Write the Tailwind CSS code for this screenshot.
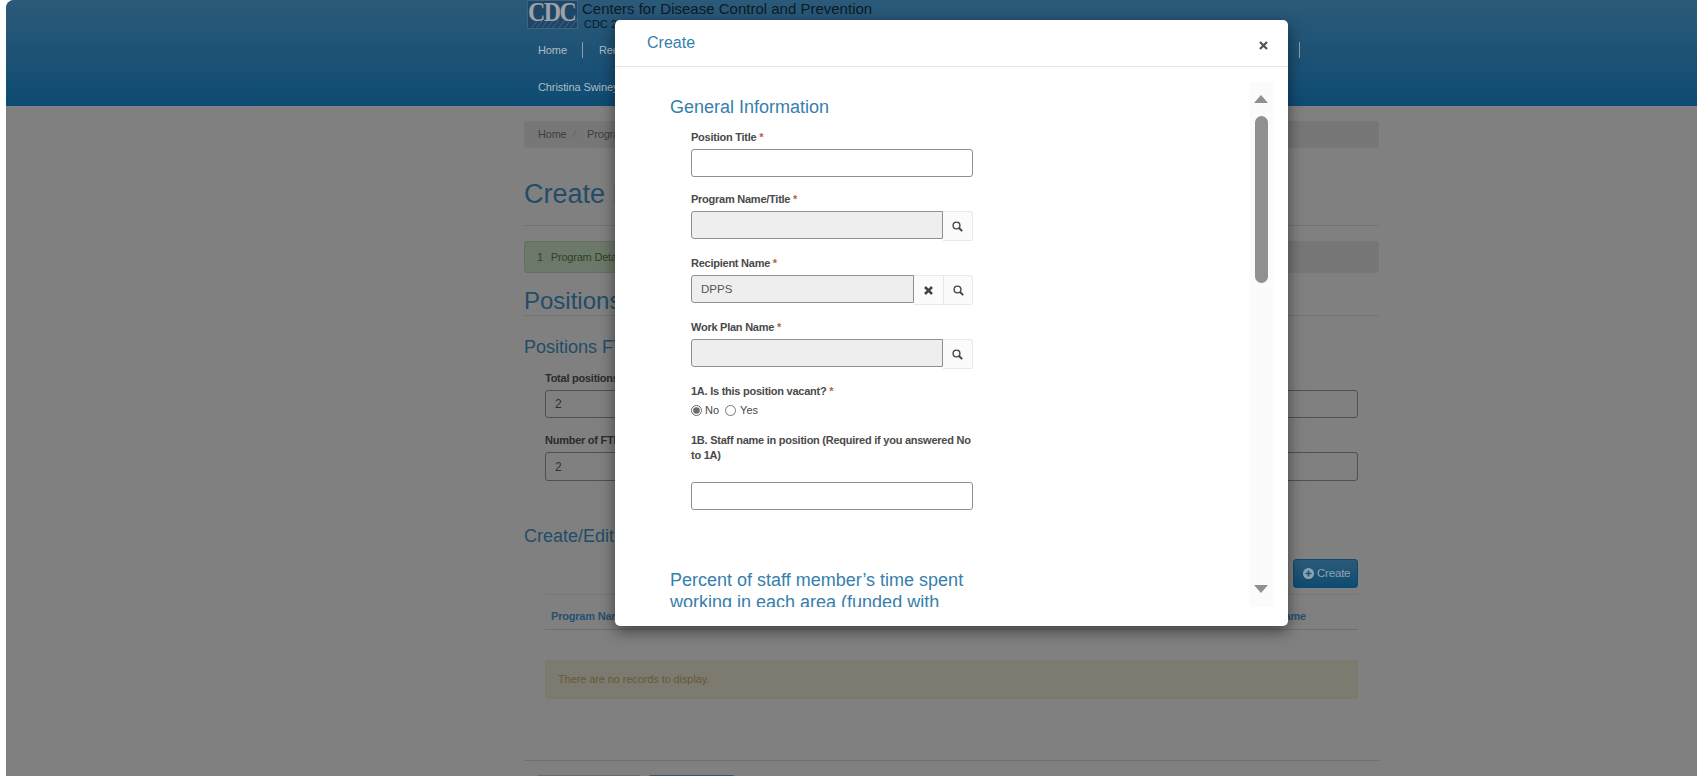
<!DOCTYPE html>
<html lang="en">

<head>
  <meta charset="UTF-8">
  <meta name="viewport" content="width=device-width, initial-scale=1.0">
  <title>Create Position</title>
  <script src="https://cdn.jsdelivr.net/npm/@tailwindcss/browser@4"></script>
</head>

<body class="bg-white h-screen overflow-hidden font-['Liberation_Sans',Arial,sans-serif]">
  <div class="relative h-[776px] overflow-hidden">

    <!-- dimmed page behind the dialog -->
    <div class="ml-[6px] h-full bg-[#808080] rounded-tl-[8px] overflow-hidden">
      <header class="h-[106px] bg-gradient-to-b from-[#2b5a79] to-[#0d4b72]">
        <div class="ml-[518px] w-[855px]">
          <div class="flex h-[29px] pl-[3px]">
            <div class="relative w-[51px] h-[29px] bg-[#1d4668] border border-[#3f6283] overflow-hidden">
              <svg class="absolute inset-0" width="51" height="29" viewBox="0 0 51 29" fill="none" stroke="#56799a" stroke-width="0.6">
                <path d="M2 29L9 20M7 29L14 20M12 29L19 20M17 29L25 20M23 29L31 19M29 29L38 18M35 29L44 18M41 29L50 17M47 29L51 24" />
              </svg>
              <span class="absolute left-0 -top-[2px] origin-top scale-y-[1.15] font-['Liberation_Serif',serif] font-bold text-[24px] leading-[22px] tracking-[-1.6px] text-[#9ea2a5]">CDC</span>
            </div>
            <div class="ml-[4px]">
              <div class="text-[15px] leading-[18px] text-[#0d1a24]">Centers for Disease Control and Prevention</div>
              <div class="ml-[2px] text-[11px] leading-[13px] text-[#0d1a24]">CDC 24/7</div>
            </div>
          </div>
          <nav class="relative h-[77px] pl-[14px] pt-[13px] text-[11px] tracking-[-0.1px] leading-[16px] text-[#aebcc4]">
            <div class="flex items-center h-[16px]">
              <span class="w-[44px]">Home</span>
              <span class="w-px h-[16px] bg-[#8d9aa3]"></span>
              <span class="ml-[16px]">Recipients</span>
              <span class="absolute left-[775px] top-[13px] w-px h-[16px] bg-[#8d9aa3]"></span>
            </div>
            <div class="mt-[21px]">Christina Swiney</div>
          </nav>
        </div>
      </header>

      <main class="ml-[518px] w-[855px]">
        <div class="mt-[15px] h-[27px] bg-[#777777] rounded-[3px] pl-[14px] text-[11px] tracking-[-0.2px] leading-[27px] text-[#3f3f3f]">
          Home <span class="ml-[3px] mr-[9px] text-[#666]">/</span> Program
        </div>

        <h1 class="mt-[31px] text-[27px] leading-[30px] text-[#234c66]">Create Position</h1>
        <div class="mt-[16px] border-t border-[#737373]"></div>

        <div class="mt-[15px] h-[32px] bg-[#777777] rounded-[3px]">
          <div class="w-[200px] h-[32px] bg-[#6c7869] rounded-l-[3px] border border-[#657060] pl-[12px] text-[11px] tracking-[-0.2px] leading-[30px] text-[#2b4426]">
            1 <span class="ml-[5px]">Program Details</span>
          </div>
        </div>

        <h2 class="mt-[15px] text-[24px] leading-[26px] text-[#234c66]">Positions</h2>
        <div class="mt-[1px] border-t border-[#737373]"></div>

        <h3 class="mt-[21px] text-[18px] leading-[20px] text-[#234c66]">Positions FTE</h3>

        <div class="ml-[21px] w-[813px]">
          <label class="block mt-[14px] text-[11px] font-bold tracking-[-0.25px] leading-[14px] text-[#2b2b2b]">Total positions</label>
          <input type="text" value="2" class="block mt-[5px] w-full h-[28px] border border-[#505050] rounded-[3px] bg-transparent pl-[9px] text-[12px] text-[#2f2f2f]">
          <label class="block mt-[15px] text-[11px] font-bold tracking-[-0.25px] leading-[14px] text-[#2b2b2b]">Number of FTE</label>
          <input type="text" value="2" class="block mt-[5px] w-full h-[29px] border border-[#505050] rounded-[3px] bg-transparent pl-[9px] text-[12px] text-[#2f2f2f]">
        </div>

        <h3 class="mt-[45px] text-[18px] leading-[20px] text-[#234c66]">Create/Edit</h3>

        <div class="ml-[21px] w-[813px]">
          <div class="mt-[13px] flex justify-end">
            <button class="flex items-center gap-[3px] h-[29px] w-[65px] pl-[9px] rounded-[3px] border border-[#0f4a70] bg-gradient-to-b from-[#2b5a79] to-[#0d4b72] text-[11.5px] tracking-[-0.2px] text-[#8fa3af]">
              <svg width="11" height="11" viewBox="0 0 11 11">
                <circle cx="5.5" cy="5.5" r="5.5" fill="#8fa3af" />
                <path d="M5.5 2.5v6M2.5 5.5h6" stroke="#1d5478" stroke-width="1.6" />
              </svg>
              Create
            </button>
          </div>
          <div class="mt-[6px] border-t border-[#777777]"></div>
          <div class="flex justify-between h-[35px] pl-[6px] pr-[52px] border-b border-[#6f6f6f] text-[11px] font-bold tracking-[-0.2px] leading-[42px] text-[#27506f]">
            <span>Program Name</span>
            <span>Name</span>
          </div>
          <div class="mt-[30px] h-[39px] bg-[#7d7b70] border border-[#7b796a] rounded-[3px] pl-[12px] text-[11px] tracking-[-0.1px] leading-[37px] text-[#655838]">
            There are no records to display.
          </div>
        </div>

        <div class="mt-[61px] border-t border-[#6f6f6f]"></div>
        <div class="mt-[14px] ml-[12px] flex gap-[6px]">
          <div class="w-[106px] h-[30px] bg-[#777777] border border-[#6a6a6a] rounded-[3px]"></div>
          <div class="w-[87px] h-[30px] bg-[#2b5a79] rounded-[3px]"></div>
        </div>
      </main>
    </div>

    <!-- dialog -->
    <div class="absolute left-[615px] top-[20px] w-[673px] h-[606px] bg-white rounded-[5px] shadow-[0_5px_15px_rgba(0,0,0,0.5)]">
      <div class="flex items-center justify-between h-[47px] border-b border-[#e5e5e5] pl-[32px] pr-[20px]">
        <h4 class="text-[16px] leading-[44px] text-[#3680ab]">Create</h4>
        <svg class="mt-[4px]" width="9" height="9" viewBox="0 0 9 9" stroke="#555" stroke-width="2.3">
          <path d="M1 1L8 8M8 1L1 8" />
        </svg>
      </div>

      <div class="relative mt-[15px] ml-[15px] w-[643px] h-[525px] overflow-hidden">
        <!-- scrollbar -->
        <div class="absolute right-0 top-0 w-[23px] h-full bg-[#fbfbfb]">
          <div class="absolute left-[4px] top-[13px] w-0 h-0 border-x-[7.5px] border-x-transparent border-b-[8px] border-b-[#909090]"></div>
          <div class="absolute left-[5px] top-[34px] w-[13px] h-[167px] rounded-[7px] bg-[#909090]"></div>
          <div class="absolute left-[4px] top-[503px] w-0 h-0 border-x-[7.5px] border-x-transparent border-t-[8px] border-t-[#909090]"></div>
        </div>

        <div class="pl-[40px] pt-[15px]">
          <h3 class="text-[18px] leading-[20px] text-[#3680ab]">General Information</h3>

          <form class="ml-[21px] w-[282px] text-[11px] text-[#4a4a4a]">
            <div class="mt-[13px]">
              <label class="block h-[15px] mb-[4px] font-bold tracking-[-0.25px] leading-[15px]">Position Title <span class="text-[#b5623a]">*</span></label>
              <input type="text" class="block w-full h-[28px] border border-[#8f8f8f] rounded-[3px]">
            </div>

            <div class="mt-[15px]">
              <label class="block h-[15px] mb-[4px] font-bold tracking-[-0.25px] leading-[15px]">Program Name/Title <span class="text-[#b5623a]">*</span></label>
              <div class="flex items-start">
                <input type="text" disabled class="flex-1 min-w-0 h-[28px] bg-[#eeeeee] border border-[#8f8f8f] rounded-l-[3px]">
                <span class="flex items-center justify-center w-[30px] h-[30px] bg-[#fbfbfb] border border-l-0 border-[#e8e8e8] rounded-r-[3px]">
                  <svg width="11" height="11" viewBox="0 0 11 11" fill="none" stroke="#444" stroke-width="1.4">
                    <circle cx="4.5" cy="4.5" r="3.4" />
                    <path d="M7 7L10.2 10.2" stroke-width="1.9" />
                  </svg>
                </span>
              </div>
            </div>

            <div class="mt-[15px]">
              <label class="block h-[15px] mb-[4px] font-bold tracking-[-0.25px] leading-[15px]">Recipient Name <span class="text-[#b5623a]">*</span></label>
              <div class="flex items-start">
                <input type="text" disabled value="DPPS" class="flex-1 min-w-0 h-[28px] bg-[#eeeeee] border border-[#8f8f8f] rounded-l-[3px] pl-[9px] text-[11.5px] text-[#555555]">
                <span class="flex items-center justify-center w-[29px] h-[30px] bg-[#fbfbfb] border border-l-0 border-r-0 border-[#e8e8e8]">
                  <svg width="9" height="9" viewBox="0 0 9 9" stroke="#444" stroke-width="2.5">
                    <path d="M1 1L8 8M8 1L1 8" />
                  </svg>
                </span>
                <span class="flex items-center justify-center w-[30px] h-[30px] bg-[#fbfbfb] border border-[#e8e8e8] rounded-r-[3px]">
                  <svg width="11" height="11" viewBox="0 0 11 11" fill="none" stroke="#444" stroke-width="1.4">
                    <circle cx="4.5" cy="4.5" r="3.4" />
                    <path d="M7 7L10.2 10.2" stroke-width="1.9" />
                  </svg>
                </span>
              </div>
            </div>

            <div class="mt-[15px]">
              <label class="block h-[15px] mb-[4px] font-bold tracking-[-0.25px] leading-[15px]">Work Plan Name <span class="text-[#b5623a]">*</span></label>
              <div class="flex items-start">
                <input type="text" disabled class="flex-1 min-w-0 h-[28px] bg-[#eeeeee] border border-[#8f8f8f] rounded-l-[3px]">
                <span class="flex items-center justify-center w-[30px] h-[30px] bg-[#fbfbfb] border border-l-0 border-[#e8e8e8] rounded-r-[3px]">
                  <svg width="11" height="11" viewBox="0 0 11 11" fill="none" stroke="#444" stroke-width="1.4">
                    <circle cx="4.5" cy="4.5" r="3.4" />
                    <path d="M7 7L10.2 10.2" stroke-width="1.9" />
                  </svg>
                </span>
              </div>
            </div>

            <div class="mt-[15px]">
              <label class="block h-[15px] font-bold tracking-[-0.25px] leading-[15px]">1A. Is this position vacant? <span class="text-[#b5623a]">*</span></label>
              <div class="mt-[4px] flex items-center h-[15px]">
                <input type="radio" name="vacant" checked class="m-0 w-[11px] h-[11px] accent-[#6b6b6b]">
                <span class="ml-[3px]">No</span>
                <input type="radio" name="vacant" class="m-0 ml-[6px] w-[11px] h-[11px]">
                <span class="ml-[4px]">Yes</span>
              </div>
            </div>

            <div class="mt-[15px]">
              <label class="block font-bold tracking-[-0.25px] leading-[15px]">1B. Staff name in position (Required if you answered No to 1A)</label>
              <input type="text" class="block mt-[19px] w-full h-[28px] border border-[#8f8f8f] rounded-[3px]">
            </div>
          </form>

          <h3 class="mt-[59px] w-[325px] text-[18px] leading-[22px] text-[#3680ab]">Percent of staff member’s time spent working in each area (funded with</h3>
        </div>
      </div>
    </div>
  </div>
</body>

</html>
